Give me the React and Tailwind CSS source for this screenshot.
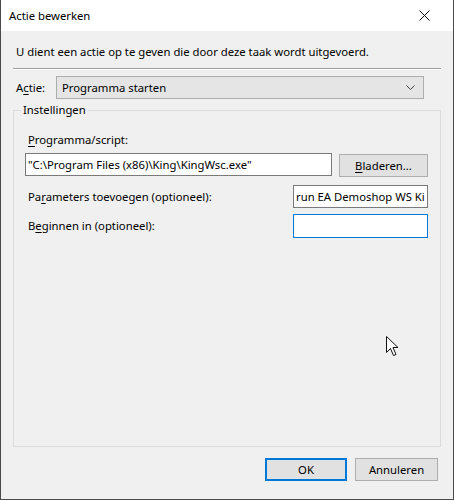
export default function App() {
  const font = "font-['Noto_Sans',sans-serif]";
  return (
    <div className={`relative w-[454px] h-[500px] bg-[#f0f0f0] border border-t-0 border-[#4a4a4a] flex flex-col text-[11.3px] text-black ${font}`}>
      {/* Title bar */}
      <div className="h-[31px] bg-white flex items-center justify-between pl-[8px] pr-[23px] shrink-0">
        <span className="leading-[16px]">Actie bewerken</span>
        <svg width="11" height="11" viewBox="0 0 11 11">
          <path d="M0.5 0.5 L10.5 10.5 M10.5 0.5 L0.5 10.5" stroke="#111" strokeWidth="1" fill="none" />
        </svg>
      </div>

      {/* Intro */}
      <div className="mt-[13px] pl-[15px] h-[16px] leading-[16px]">
        U dient een actie op te geven die door deze taak wordt uitgevoerd.
      </div>

      {/* Separator */}
      <div className="mt-[8px] ml-[12px] w-[428px] border-t border-t-[#a0a0a0] border-b border-b-white" />

      {/* Actie row */}
      <div className="mt-[6px] flex items-center pl-[15px]">
        <span className="w-[40px] leading-[16px]">
          A<span className="underline underline-offset-2">c</span>tie:
        </span>
        <div className="w-[368px] h-[23px] bg-[#e5e5e5] border border-[#adadad] flex items-center justify-between pl-[5px] pr-[8px]">
          <span className="leading-[16px]">Programma starten</span>
          <svg width="9" height="5" viewBox="0 0 9 5">
            <path d="M0.5 0.5 L4.5 4.5 L8.5 0.5" stroke="#444" strokeWidth="1" fill="none" />
          </svg>
        </div>
      </div>

      {/* Group box */}
      <div className="relative mt-[11px] ml-[12px] w-[428px] h-[337px] border border-[#dcdcdc] flex flex-col pl-[11px] pr-[12px]">
        <span className="absolute -top-[9px] left-[7px] bg-[#f0f0f0] px-[2px] leading-[16px]">Instellingen</span>

        <div className="mt-[21px] ml-[3px] h-[16px] leading-[16px]">
          <span className="underline underline-offset-2">P</span>rogramma/script:
        </div>

        <div className="mt-[5px] flex items-start justify-between">
          <div className="w-[307px] h-[23px] bg-white border border-[#7a7a7a] flex items-center pl-[2px] leading-[16px] whitespace-nowrap overflow-hidden">
            "C:\Program Files (x86)\King\KingWsc.exe"
          </div>
          <div className="mt-[1px] w-[89px] h-[23px] bg-[#e1e1e1] border border-[#adadad] flex items-center justify-center leading-[16px]">
            <span><span className="underline underline-offset-2">B</span>laderen...</span>
          </div>
        </div>

        <div className="mt-[8px] flex items-center justify-between">
          <span className="ml-[3px] leading-[16px]">
            Pa<span className="underline underline-offset-2">r</span>ameters toevoegen (optioneel):
          </span>
          <div className="w-[135px] h-[23px] bg-white border border-[#7a7a7a] flex items-center pl-[2px] leading-[16px] whitespace-nowrap overflow-hidden">
            run EA Demoshop WS Ki
          </div>
        </div>

        <div className="mt-[6px] flex items-center justify-between">
          <span className="ml-[3px] leading-[16px]">
            B<span className="underline underline-offset-2">e</span>ginnen in (optioneel):
          </span>
          <div className="w-[135px] h-[24px] bg-white border border-[#0078d7]" />
        </div>
      </div>

      {/* Buttons */}
      <div className="mt-[11px] flex justify-end gap-[8px] pr-[15px]">
        <div className="w-[82px] h-[23px] bg-[#e1e1e1] border-2 border-[#0078d7] flex items-center justify-center leading-[16px]">
          OK
        </div>
        <div className="w-[83px] h-[23px] bg-[#e1e1e1] border border-[#adadad] flex items-center justify-center leading-[16px]">
          Annuleren
        </div>
      </div>

      {/* Mouse cursor */}
      <svg className="absolute left-[385px] top-[336px]" width="13" height="21" viewBox="0 0 13 21">
        <path d="M0.5 0.5 L0.5 16.5 L4.5 12.5 L7.5 19.5 L10 18.5 L7 11.5 L12 11.5 Z" fill="white" stroke="#111" strokeWidth="1" strokeLinejoin="miter" />
      </svg>
    </div>
  );
}
